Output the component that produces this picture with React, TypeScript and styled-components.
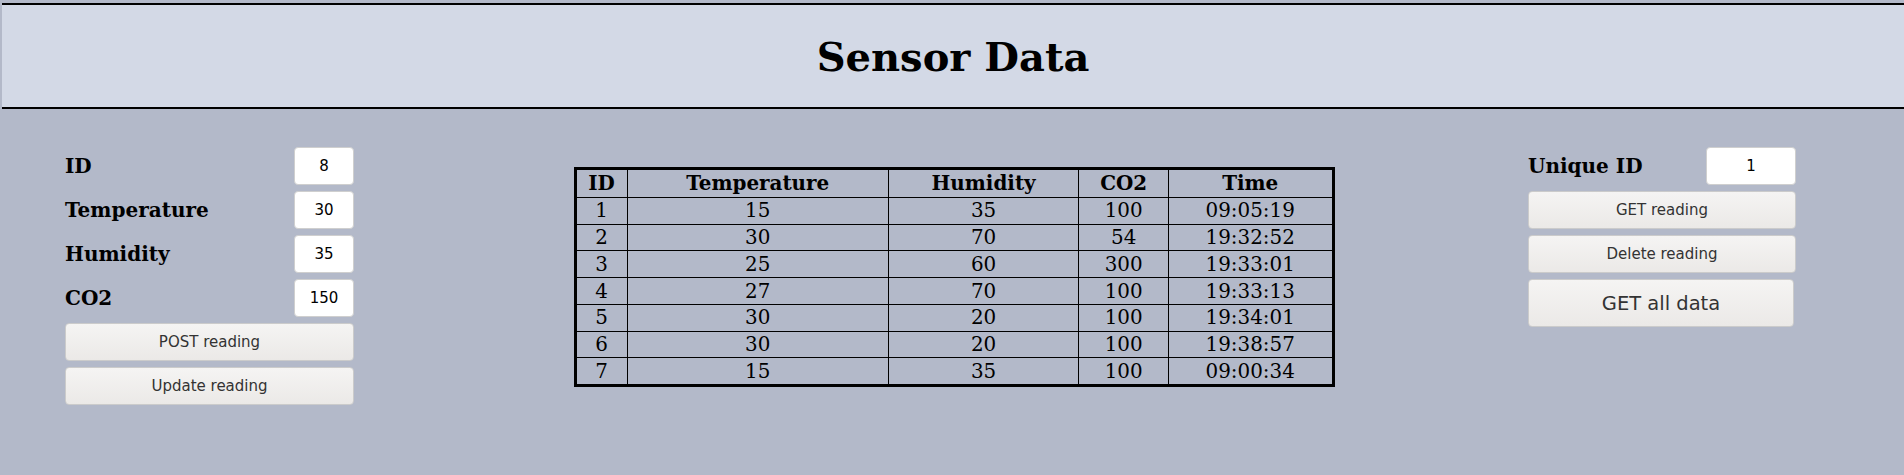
import React from "react";
import styled, { createGlobalStyle } from "styled-components";

const readings = [
  { id: 1, temperature: 15, humidity: 35, co2: 100, time: "09:05:19" },
  { id: 2, temperature: 30, humidity: 70, co2: 54, time: "19:32:52" },
  { id: 3, temperature: 25, humidity: 60, co2: 300, time: "19:33:01" },
  { id: 4, temperature: 27, humidity: 70, co2: 100, time: "19:33:13" },
  { id: 5, temperature: 30, humidity: 20, co2: 100, time: "19:34:01" },
  { id: 6, temperature: 30, humidity: 20, co2: 100, time: "19:38:57" },
  { id: 7, temperature: 15, humidity: 35, co2: 100, time: "09:00:34" },
];

const fields = [
  { label: "ID", value: "8" },
  { label: "Temperature", value: "30" },
  { label: "Humidity", value: "35" },
  { label: "CO2", value: "150" },
];

const columns = [
  { title: "ID", width: 52 },
  { title: "Temperature", width: 260 },
  { title: "Humidity", width: 190 },
  { title: "CO2", width: 89 },
  { title: "Time", width: 164 },
];

const App = () => {
  return (
    <>
      <GlobalStyle />
      <Header>
        <Title>Sensor Data</Title>
      </Header>
      <Main>
        <LeftPanel>
          {fields.map((field) => (
            <FieldRow key={field.label}>
              <Label>{field.label}</Label>
              <ValueInput defaultValue={field.value} />
            </FieldRow>
          ))}
          <ActionButton>POST reading</ActionButton>
          <ActionButton>Update reading</ActionButton>
        </LeftPanel>

        <DataTable>
          <colgroup>
            {columns.map((col) => (
              <col key={col.title} style={{ width: col.width }} />
            ))}
          </colgroup>
          <thead>
            <tr>
              {columns.map((col) => (
                <Th key={col.title}>{col.title}</Th>
              ))}
            </tr>
          </thead>
          <tbody>
            {readings.map((r) => (
              <tr key={r.id}>
                <Td>{r.id}</Td>
                <Td>{r.temperature}</Td>
                <Td>{r.humidity}</Td>
                <Td>{r.co2}</Td>
                <Td>{r.time}</Td>
              </tr>
            ))}
          </tbody>
        </DataTable>

        <RightPanel>
          <FieldRow>
            <Label>Unique ID</Label>
            <ValueInput defaultValue="1" wide />
          </FieldRow>
          <ActionButton>GET reading</ActionButton>
          <ActionButton>Delete reading</ActionButton>
          <ActionButton large>GET all data</ActionButton>
        </RightPanel>
      </Main>
    </>
  );
};

export default App;

const GlobalStyle = createGlobalStyle`
  html, body {
    margin: 0;
    padding: 0;
    background: #b3b9c9;
    overflow: hidden;
  }
  body {
    font-family: "DejaVu Serif", serif;
    color: #000;
  }
`;

const Header = styled.header`
  margin: 3px 0 0 2px;
  height: 102px;
  display: flex;
  align-items: center;
  justify-content: center;
  background: #d3d9e6;
  border-top: 2px solid #000;
  border-bottom: 2px solid #000;
`;

const Title = styled.h1`
  margin: 0;
  font-size: 40px;
  font-weight: bold;
`;

const Main = styled.main`
  display: grid;
  grid-template-columns: 1fr auto 1fr;
  align-items: start;
  padding-top: 38px;
`;

const LeftPanel = styled.div`
  justify-self: start;
  margin-left: 65px;
  width: 289px;
  display: flex;
  flex-direction: column;
  gap: 6px;
`;

const RightPanel = styled.div`
  justify-self: end;
  margin-right: 108px;
  width: 268px;
  display: flex;
  flex-direction: column;
  align-items: flex-start;
  gap: 6px;
`;

const FieldRow = styled.div`
  display: flex;
  align-items: center;
  justify-content: space-between;
  width: 100%;
`;

const Label = styled.span`
  font-size: 20px;
  font-weight: bold;
`;

const ValueInput = styled.input<{ wide?: boolean }>`
  box-sizing: border-box;
  width: ${({ wide }) => (wide ? "90px" : "60px")};
  height: 38px;
  background: #fff;
  border: 1px solid #cfcfcf;
  border-radius: 4px;
  text-align: center;
  font-family: "DejaVu Sans", sans-serif;
  font-size: 15px;
  color: #000;
  outline: none;
`;

const ActionButton = styled.button<{ large?: boolean }>`
  box-sizing: border-box;
  width: ${({ large }) => (large ? "266px" : "100%")};
  height: ${({ large }) => (large ? "48px" : "38px")};
  background: linear-gradient(#f5f4f3, #ebe9e7);
  border: 1px solid #cbcbcb;
  border-radius: 4px;
  color: #333;
  font-family: "DejaVu Sans", sans-serif;
  font-size: ${({ large }) => (large ? "19.5px" : "15px")};
  padding: 0;
`;

const DataTable = styled.table`
  margin: 20px 0 0 4px;
  width: 761px;
  table-layout: fixed;
  border-collapse: collapse;
  border: 3px solid #000;
  font-size: 19.9px;
`;

const Th = styled.th`
  border: 1px solid #000;
  padding: 1.4px 2px;
  text-align: center;
  font-weight: bold;
`;

const Td = styled.td`
  border: 1px solid #000;
  padding: 1.4px 2px;
  text-align: center;
`;
